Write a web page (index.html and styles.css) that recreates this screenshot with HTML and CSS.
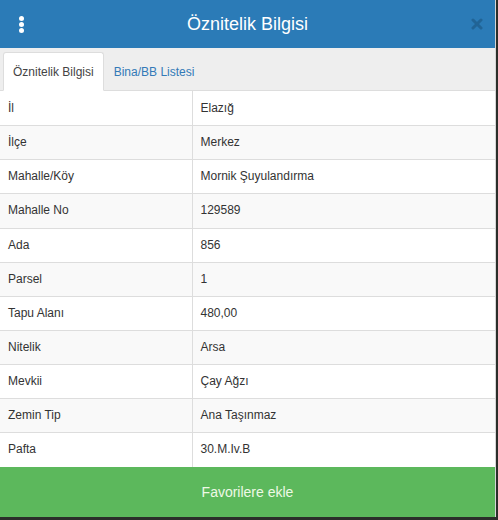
FILE: index.html
```html
<!DOCTYPE html>
<html lang="tr">
<head>
<meta charset="utf-8">
<title>Öznitelik Bilgisi</title>
<link rel="stylesheet" href="styles.css">
</head>
<body>
<div class="panel">
  <header class="panel-head">
    <span class="kebab" aria-hidden="true"><i></i><i></i><i></i></span>
    <h1 class="panel-title">Öznitelik Bilgisi</h1>
    <span class="close" aria-label="Kapat">
      <svg width="12" height="12" viewBox="0 0 12 12"><path d="M2 2L10 10M10 2L2 10" stroke="currentColor" stroke-width="3" stroke-linecap="round"/></svg>
    </span>
  </header>
  <nav class="tabs">
    <a class="tab active">Öznitelik Bilgisi</a>
    <a class="tab">Bina/BB Listesi</a>
  </nav>
  <table class="attr-table">
    <tbody>
      <tr><td>İl</td><td>Elazığ</td></tr>
      <tr><td>İlçe</td><td>Merkez</td></tr>
      <tr><td>Mahalle/Köy</td><td>Mornik Şuyulandırma</td></tr>
      <tr><td>Mahalle No</td><td>129589</td></tr>
      <tr><td>Ada</td><td>856</td></tr>
      <tr><td>Parsel</td><td>1</td></tr>
      <tr><td>Tapu Alanı</td><td>480,00</td></tr>
      <tr><td>Nitelik</td><td>Arsa</td></tr>
      <tr><td>Mevkii</td><td>Çay Ağzı</td></tr>
      <tr><td>Zemin Tip</td><td>Ana Taşınmaz</td></tr>
      <tr><td>Pafta</td><td>30.M.Iv.B</td></tr>
    </tbody>
  </table>
  <button class="fav-btn">Favorilere ekle</button>
</div>
</body>
</html>
```

FILE: styles.css
```css
* { box-sizing: border-box; }

html, body {
  margin: 0;
  padding: 0;
  background: #2b2e2a;
  font-family: "Liberation Sans", Arial, sans-serif;
}

.panel {
  width: 496px;
  height: 517px;
  background: #fff;
  display: flex;
  flex-direction: column;
  border-right: 1px solid #d6d6d6;
}

.panel-head {
  height: 48px;
  background: #2b7bb7;
  display: flex;
  align-items: center;
  justify-content: center;
  position: relative;
  flex-shrink: 0;
}

.panel-title {
  margin: 0;
  color: #fff;
  font-size: 18px;
  font-weight: normal;
}

.kebab {
  position: absolute;
  left: 19px;
  top: 16px;
  display: flex;
  flex-direction: column;
  gap: 1px;
}

.kebab i {
  width: 5px;
  height: 5px;
  border-radius: 50%;
  background: #fff;
}

.close {
  position: absolute;
  right: 12px;
  top: 18px;
  color: #1f5f8e;
  opacity: 0.8;
  display: flex;
}

.tabs {
  height: 43px;
  background: #eeeeee;
  display: flex;
  align-items: flex-end;
  padding-left: 3px;
  border-bottom: 1px solid #ddd;
  flex-shrink: 0;
}

.tab {
  height: 39px;
  padding: 0 9px;
  display: flex;
  align-items: center;
  font-size: 12px;
  color: #337ab7;
  margin-bottom: -1px;
  border: 1px solid transparent;
}

.tab.active {
  background: #fff;
  color: #444;
  border-color: #ddd;
  border-bottom-color: #fff;
  border-radius: 3px 3px 0 0;
}

.attr-table {
  width: 100%;
  border-collapse: collapse;
  font-size: 12px;
  line-height: 1.42857;
  color: #333;
}

.attr-table td {
  padding: 8px;
  border-top: 1px solid #ddd;
  vertical-align: middle;
}

.attr-table tr:first-child td { border-top: none; padding-top: 8.5px; padding-bottom: 8.5px; }

.attr-table td:first-child {
  width: 192px;
  border-right: 1px solid #ddd;
}

.attr-table tr:nth-child(even) td { background: #f9f9f9; }

.fav-btn {
  flex: 1;
  margin: 0;
  border: none;
  background: #5cb85c;
  color: #eef9e6;
  font-family: inherit;
  font-size: 14px;
  padding: 0;
}
```
